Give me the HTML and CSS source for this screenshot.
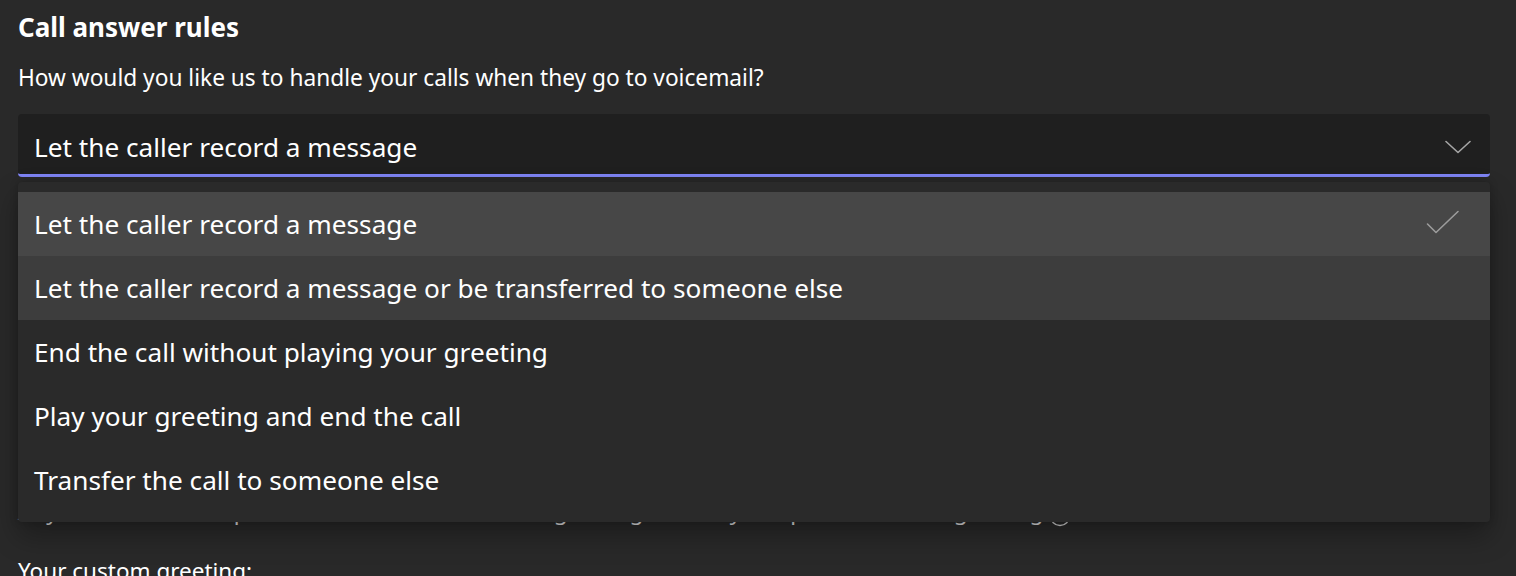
FILE: index.html
```html
<!DOCTYPE html>
<html lang="en">
<head>
<meta charset="utf-8">
<title>Call answer rules</title>
<link rel="stylesheet" href="styles.css">
</head>
<body>
<main class="page">
  <h1 class="title">Call answer rules</h1>
  <p class="question">How would you like us to handle your calls when they go to voicemail?</p>
  <div class="field">
    <div class="select">
      <span class="select-value">Let the caller record a message</span>
      <svg class="chevron" width="26" height="14" viewBox="0 0 26 14" aria-hidden="true"><path d="M1 1.5 L13 12.5 L25 1.5" fill="none" stroke="#a6a6a6" stroke-width="1.6" stroke-linecap="round" stroke-linejoin="round"/></svg>
    </div>
    <ul class="menu">
      <li class="option selected"><span>Let the caller record a message</span>
        <svg class="check" width="34" height="26" viewBox="0 0 34 26" aria-hidden="true"><path d="M1.5 14 L10 22.5 L32 1.5" fill="none" stroke="#9c9c9c" stroke-width="1.6" stroke-linecap="round" stroke-linejoin="round"/></svg>
      </li>
      <li class="option hover"><span>Let the caller record a message or be transferred to someone else</span></li>
      <li class="option"><span>End the call without playing your greeting</span></li>
      <li class="option"><span>Play your greeting and end the call</span></li>
      <li class="option"><span>Transfer the call to someone else</span></li>
    </ul>
  </div>
  <p class="note"><span>Any caller who can't press # will hear the recorded greeting and they can press 0 to hear greeting</span>
    <svg class="info" width="22" height="22" viewBox="0 0 22 22" aria-hidden="true"><circle cx="11" cy="11" r="9.5" fill="none" stroke="#d6d6d6" stroke-width="1.4"/><path d="M11 10 V16" stroke="#d6d6d6" stroke-width="1.4"/><circle cx="11" cy="7" r="1" fill="#d6d6d6"/></svg>
  </p>
  <p class="label">Your custom greeting:</p>
</main>
</body>
</html>
```

FILE: styles.css
```css
html, body {
  margin: 0;
  padding: 0;
  background: #292929;
  height: 100%;
  overflow: hidden;
}

.page {
  padding: 0 26px 0 18px;
  font-family: "Noto Sans", "Open Sans", sans-serif;
  color: #ffffff;
}

.title {
  margin: 0;
  padding-top: 12px;
  font-size: 26px;
  line-height: 30px;
  font-weight: 700;
}

.question {
  margin: 0;
  padding-top: 21px;
  font-size: 22.7px;
  line-height: 30px;
}

.field {
  position: relative;
  margin-top: 21px;
}

.select {
  display: flex;
  align-items: center;
  justify-content: space-between;
  height: 54px;
  padding: 6px 19px 0 16px;
  background: #1f1f1f;
  border-radius: 4px;
  border-bottom: 3px solid #7f85f5;
  font-size: 26.2px;
}

.chevron {
  display: block;
}

.menu {
  position: absolute;
  top: 68px;
  left: 0;
  right: 0;
  margin: 0;
  padding: 10px 0;
  list-style: none;
  background: #2a2a2a;
  border-radius: 4px;
  box-shadow: 0 14px 28px rgba(0, 0, 0, 0.3), 0 0 8px rgba(0, 0, 0, 0.2);
  z-index: 2;
}

.option {
  display: flex;
  align-items: center;
  justify-content: space-between;
  height: 64px;
  padding: 0 30px 0 16px;
  font-size: 26.2px;
}

.option.selected {
  background: #474747;
}

.option.hover {
  background: #3d3d3d;
}

.check {
  display: block;
  margin-top: -2px;
}

.note {
  display: flex;
  align-items: center;
  gap: 6px;
  margin: 0;
  padding-top: 319px;
  font-size: 22.5px;
  line-height: 30px;
  color: #e6e6e6;
}

.info {
  display: block;
  flex: none;
  margin-top: 9px;
}

.label {
  margin: 0;
  padding-top: 29px;
  font-size: 22.5px;
  line-height: 30px;
}
```
